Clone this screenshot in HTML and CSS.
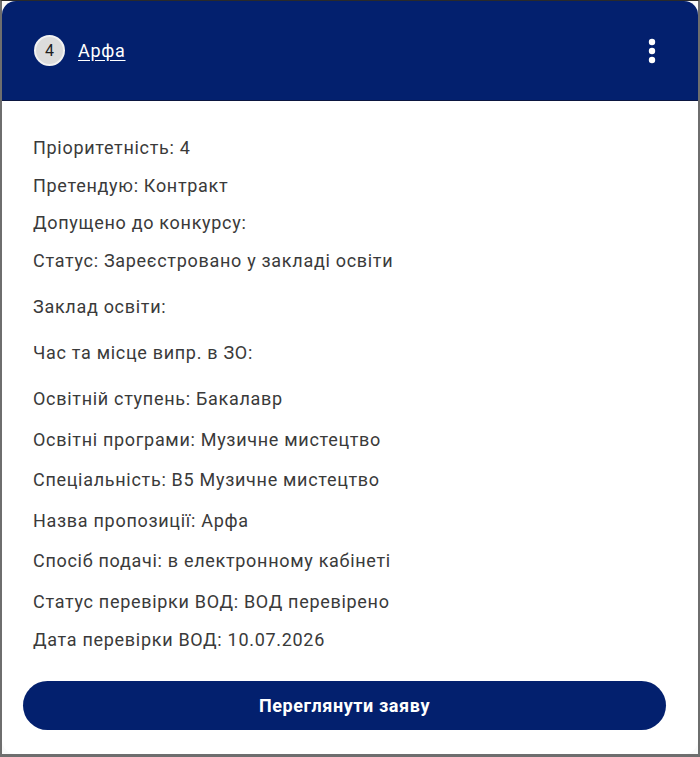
FILE: index.html
```html
<!DOCTYPE html>
<html lang="uk">
<head>
  <meta charset="UTF-8" />
  <meta name="viewport" content="width=device-width, initial-scale=1.0" />
  <title>Заява | Арфа</title>
  <link rel="stylesheet" href="styles.css">
</head>
<body>
  <div class="frame">
    <div class="card">
      <div class="card-header">
        <div class="title">
          <span class="badge">4</span>
          <a href="#" class="title-link">Арфа</a>
        </div>
        <button class="menu" type="button" aria-label="Меню">
          <svg width="8" height="26" viewBox="0 0 8 26">
            <circle cx="4" cy="4" r="3.2" fill="#fff" />
            <circle cx="4" cy="13" r="3.2" fill="#fff" />
            <circle cx="4" cy="22" r="3.2" fill="#fff" />
          </svg>
        </button>
      </div>

      <div class="card-body">
        <div class="group">
          <div class="row">Пріоритетність: 4</div>
          <div class="row">Претендую: Контракт</div>
          <div class="row">Допущено до конкурсу:</div>
          <div class="row">Статус: Зареєстровано у закладі освіти</div>
        </div>

        <div class="group spaced">
          <div class="row">Заклад освіти:</div>
        </div>
        <div class="group spaced">
          <div class="row">Час та місце випр. в ЗО:</div>
        </div>

        <div class="group spaced wide">
          <div class="row">Освітній ступень: Бакалавр</div>
          <div class="row">Освітні програми: Музичне мистецтво</div>
          <div class="row">Спеціальність: B5 Музичне мистецтво</div>
          <div class="row">Назва пропозиції: Арфа</div>
          <div class="row">Спосіб подачі: в електронному кабінеті</div>
          <div class="row">Статус перевірки ВОД: ВОД перевірено</div>
          <div class="row last">Дата перевірки ВОД: 10.07.2026</div>
        </div>

        <button class="view-btn" type="button">Переглянути заяву</button>
      </div>
    </div>
  </div>
</body>
</html>
```

FILE: styles.css
```css
* {
  box-sizing: border-box;
}
body {
  margin: 0;
  padding: 0;
  font-family: Roboto, "Noto Sans", Arial, sans-serif;
  background: #fff;
}
.frame {
  width: 700px;
  height: 757px;
  border: 2px solid #6e6e6e;
  border-top: 1px solid #2a2a2a;
  border-bottom-width: 3px;
  background: #fafafa;
}
.card {
  height: 100%;
  border-radius: 14px;
  overflow: hidden;
  background: #fff;
  display: flex;
  flex-direction: column;
}
.card-header {
  height: 100px;
  background: #03206e;
  border-bottom: 1px solid #0b1640;
  display: flex;
  align-items: center;
  justify-content: space-between;
  padding: 0 42px 0 32px;
}
.title {
  display: flex;
  align-items: center;
  gap: 13px;
}
.badge {
  width: 31px;
  height: 31px;
  border-radius: 50%;
  background: #dcdcdc;
  border: 2px solid #f2f2f2;
  color: #1e1e1e;
  font-size: 16px;
  display: flex;
  align-items: center;
  justify-content: center;
}
.title-link {
  color: #fff;
  font-size: 18px;
  letter-spacing: 0.7px;
  text-decoration: underline;
  text-underline-offset: 3px;
}
.menu {
  background: none;
  border: none;
  padding: 0;
  cursor: pointer;
  display: flex;
}
.card-body {
  padding: 28px 32px 20px 21px;
}
.group .row {
  padding-left: 10px;
  line-height: 37.7px;
  font-size: 18px;
  letter-spacing: 0.7px;
  color: #3a3a3a;
}
.group.spaced {
  margin-top: 8px;
}
.group.wide .row {
  line-height: 40.5px;
}
.group.wide .row.last {
  line-height: 36px;
}
.view-btn {
  display: block;
  width: 100%;
  height: 49px;
  margin-top: 23px;
  border: none;
  border-radius: 25px;
  background: #03206e;
  color: #fff;
  font-family: Roboto, Arial, sans-serif;
  font-size: 18px;
  font-weight: bold;
  letter-spacing: 0.6px;
  cursor: pointer;
}
```
